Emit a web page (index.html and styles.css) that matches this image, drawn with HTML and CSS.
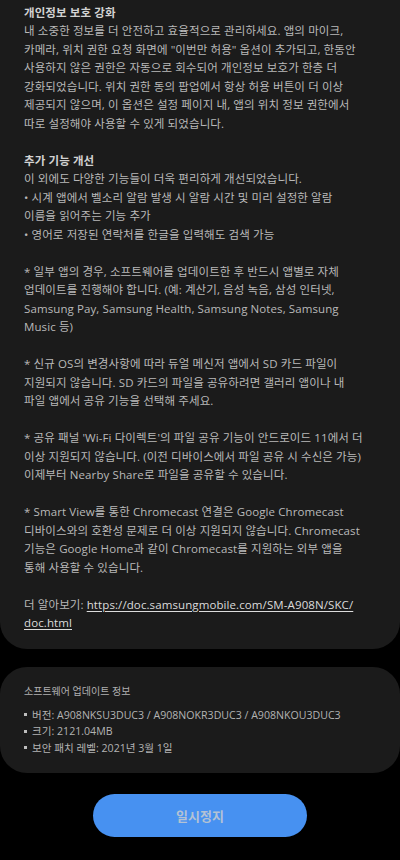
FILE: index.html
```html
<!DOCTYPE html>
<html lang="ko">
<head>
<meta charset="utf-8">
<link rel="stylesheet" href="styles.css">
</head>
<body>
<main class="screen">
  <section class="card notes">
    <p class="para"><span class="title">개인정보 보호 강화</span><br>내 소중한 정보를 더 안전하고 효율적으로 관리하세요. 앱의 마이크,<br>카메라, 위치 권한 요청 화면에 "이번만 허용" 옵션이 추가되고, 한동안<br>사용하지 않은 권한은 자동으로 회수되어 개인정보 보호가 한층 더<br>강화되었습니다. 위치 권한 동의 팝업에서 항상 허용 버튼이 더 이상<br>제공되지 않으며, 이 옵션은 설정 페이지 내, 앱의 위치 정보 권한에서<br>따로 설정해야 사용할 수 있게 되었습니다.</p>
    <p class="para"><span class="title">추가 기능 개선</span><br>이 외에도 다양한 기능들이 더욱 편리하게 개선되었습니다.<br>• 시계 앱에서 벨소리 알람 발생 시 알람 시간 및 미리 설정한 알람<br>이름을 읽어주는 기능 추가<br>• 영어로 저장된 연락처를 한글을 입력해도 검색 가능</p>
    <p class="para">* 일부 앱의 경우, 소프트웨어를 업데이트한 후 반드시 앱별로 자체<br>업데이트를 진행해야 합니다. (예: 계산기, 음성 녹음, 삼성 인터넷,<br>Samsung Pay, Samsung Health, Samsung Notes, Samsung<br>Music 등)</p>
    <p class="para">* 신규 OS의 변경사항에 따라 듀얼 메신저 앱에서 SD 카드 파일이<br>지원되지 않습니다. SD 카드의 파일을 공유하려면 갤러리 앱이나 내<br>파일 앱에서 공유 기능을 선택해 주세요.</p>
    <p class="para">* 공유 패널 'Wi-Fi 다이렉트'의 파일 공유 기능이 안드로이드 11에서 더<br>이상 지원되지 않습니다. (이전 디바이스에서 파일 공유 시 수신은 가능)<br>이제부터 Nearby Share로 파일을 공유할 수 있습니다.</p>
    <p class="para">* Smart View를 통한 Chromecast 연결은 Google Chromecast<br>디바이스와의 호환성 문제로 더 이상 지원되지 않습니다. Chromecast<br>기능은 Google Home과 같이 Chromecast를 지원하는 외부 앱을<br>통해 사용할 수 있습니다.</p>
    <p class="para last">더 알아보기: <a class="link" href="#">https://doc.samsungmobile.com/SM-A908N/SKC/<br>doc.html</a></p>
  </section>
  <section class="card info">
    <h2 class="info-title">소프트웨어 업데이트 정보</h2>
    <ul class="info-list">
      <li>버전: A908NKSU3DUC3 / A908NOKR3DUC3 / A908NKOU3DUC3</li>
      <li>크기: 2121.04MB</li>
      <li>보안 패치 레벨: 2021년 3월 1일</li>
    </ul>
  </section>
  <div class="actions">
    <button class="pause-btn" type="button">일시정지</button>
  </div>
</main>
</body>
</html>
```
FILE: styles.css
```css
html, body {
  margin: 0;
  padding: 0;
  background: #000;
}
.screen {
  width: 400px;
  min-height: 860px;
  background: #000;
  font-family: "Open Sans", "Noto Sans CJK KR", sans-serif;
}
.card {
  background: #1b1b1b;
  border-radius: 27px;
}
.notes {
  border-radius: 0 0 27px 27px;
  padding: 3.5px 16px 16.5px 24px;
}
.para {
  margin: 0 0 18.5px 0;
  font-size: 11.5px;
  letter-spacing: 0.1px;
  line-height: 18.5px;
  color: #b9b9b9;
  white-space: nowrap;
}
.para.last {
  margin-bottom: 0;
}
.title {
  font-weight: 700;
  color: #d2d2d2;
}
.link {
  color: #dcdcdc;
  text-decoration: underline;
  text-underline-offset: 2px;
}
.info {
  margin-top: 18px;
  padding: 15.5px 16px 17px 24px;
}
.info-title {
  margin: 0;
  font-size: 10px;
  line-height: 16px;
  font-weight: 400;
  color: #b0b0b0;
}
.info-list {
  list-style: none;
  margin: 8px 0 0 0;
  padding: 0;
}
.info-list li {
  font-size: 10.6px;
  line-height: 16.5px;
  color: #b3b3b3;
  display: flex;
  align-items: center;
  gap: 5px;
  white-space: nowrap;
}
.info-list li::before {
  content: "";
  width: 3px;
  height: 3px;
  background: #bdbdbd;
  flex: none;
}
.actions {
  display: flex;
  justify-content: center;
  padding-top: 21px;
}
.pause-btn {
  width: 214px;
  height: 43px;
  border: none;
  border-radius: 21.5px;
  background: #4791f1;
  color: #b3c2d4;
  font-family: "Noto Sans CJK KR", sans-serif;
  font-size: 13px;
  font-weight: 700;
  padding: 0;
}
```
